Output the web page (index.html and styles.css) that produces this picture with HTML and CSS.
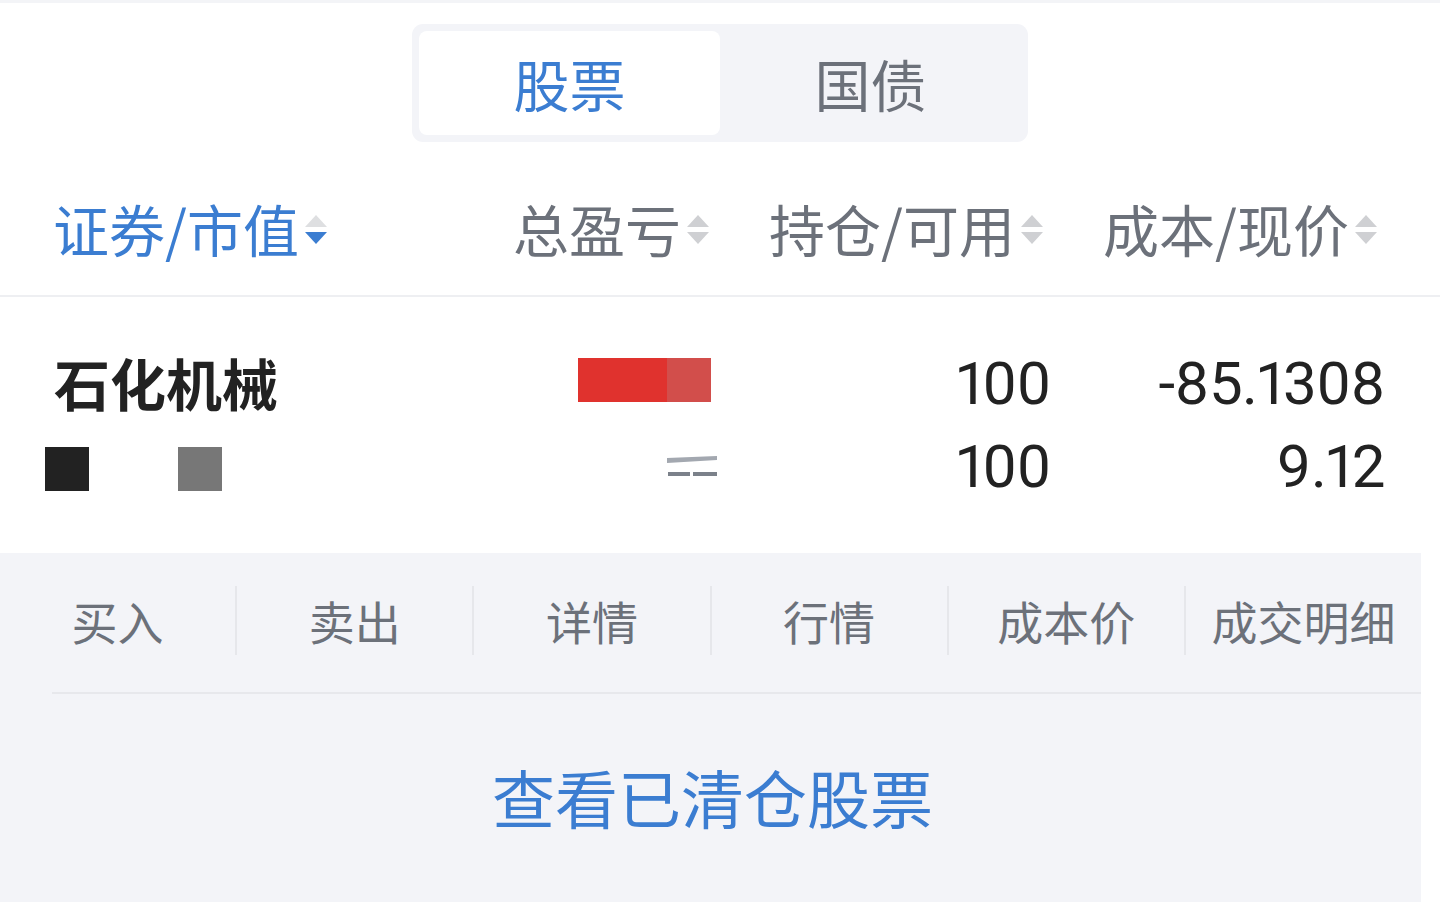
FILE: index.html
```html
<!DOCTYPE html>
<html lang="zh-CN">
<head>
<meta charset="utf-8">
<title>持仓</title>
<link rel="stylesheet" href="styles.css">
</head>
<body>
<div class="topstrip"></div>
<div class="seg-wrap">
  <div class="seg">
    <div class="seg-tab active">股票</div>
    <div class="seg-tab">国债</div>
  </div>
</div>

<div class="thead">
  <div class="th th-left active">证券/市值<span class="sort"><i class="up"></i><i class="down"></i></span></div>
  <div class="th">总盈亏<span class="sort"><i class="up"></i><i class="down"></i></span></div>
  <div class="th">持仓/可用<span class="sort"><i class="up"></i><i class="down"></i></span></div>
  <div class="th">成本/现价<span class="sort"><i class="up"></i><i class="down"></i></span></div>
</div>

<div class="row">
  <div class="cell cell-left">
    <div class="name">石化机械</div>
    <div class="redact-line"><span class="blk blk-dark"></span><span class="blk blk-gray"></span></div>
  </div>
  <div class="cell">
    <div class="line"><span class="redbar"><span class="r1"></span><span class="r2"></span></span></div>
    <div class="line">
      <svg class="dash" width="52" height="22" viewBox="0 0 52 22"><polygon points="0,2 50,0 50,4 0,7" fill="#a3a8b0"/><rect x="1" y="16" width="22" height="4" fill="#7b818a"/><rect x="26" y="16" width="24" height="4" fill="#7b818a"/></svg>
    </div>
  </div>
  <div class="cell num">
    <div class="line">100</div>
    <div class="line">100</div>
  </div>
  <div class="cell num">
    <div class="line">-85.1308</div>
    <div class="line">9.12</div>
  </div>
</div>

<div class="panel">
  <div class="actions">
    <div class="act">买入</div>
    <div class="act">卖出</div>
    <div class="act">详情</div>
    <div class="act">行情</div>
    <div class="act">成本价</div>
    <div class="act">成交明细</div>
  </div>
  <div class="panel-rule"></div>
  <div class="cleared">查看已清仓股票</div>
</div>
</body>
</html>
```

FILE: styles.css
```css
* { box-sizing: border-box; }
html, body { margin: 0; padding: 0; }
body {
  width: 1440px;
  height: 902px;
  overflow: hidden;
  background: #ffffff;
  font-family: "Noto Sans CJK SC", "Noto Sans", sans-serif;
  color: #222222;
}
.topstrip { height: 3px; background: #f3f4f7; }

.seg-wrap { display: flex; justify-content: center; padding-top: 21px; }
.seg {
  display: flex;
  width: 616px;
  height: 118px;
  padding: 7px;
  background: #f3f4f8;
  border-radius: 11px;
}
.seg-tab {
  flex: 1;
  display: flex;
  align-items: center;
  justify-content: center;
  font-size: 56px;
  color: #6c717a;
  border-radius: 8px;
  line-height: 1;
}
.seg-tab.active { background: #ffffff; color: #3b7dd1; }

.thead {
  display: grid;
  grid-template-columns: 336px 320px 334px 334px;
  padding: 0 66px 0 53px;
  height: 131px;
  margin-top: 24px;
  align-items: center;
  border-bottom: 2px solid #eeeff2;
}
.th {
  display: flex;
  align-items: center;
  justify-content: flex-end;
  font-size: 56px;
  line-height: 1;
  color: #6c717a;
  margin-top: -6px;
}
.th-left { justify-content: flex-start; }
.th.active { color: #3b7dd1; }
.sort {
  display: flex;
  flex-direction: column;
  gap: 5px;
  margin-left: 6px;
  width: 22px;
  margin-top: 4px;
}
.sort i {
  display: block;
  width: 0;
  height: 0;
  border-left: 11px solid transparent;
  border-right: 11px solid transparent;
}
.sort .up { border-bottom: 12px solid #cfd0d3; }
.sort .down { border-top: 12px solid #cfd0d3; }
.th.active .sort .up { border-bottom-color: #dedfe1; }
.th.active .sort .down { border-top-color: #3b7dd1; }

.row {
  display: grid;
  grid-template-columns: 336px 320px 334px 334px;
  padding: 45px 60px 42px 54px;
  height: 256px;
}
.cell { display: flex; flex-direction: column; align-items: flex-end; }
.cell-left { align-items: flex-start; }
.line {
  height: 83px;
  display: flex;
  align-items: center;
  font-family: Roboto, "Noto Sans", sans-serif;
  font-size: 60px;
  font-variant-numeric: proportional-nums;
  letter-spacing: -0.5px;
  color: #222222;
  line-height: 1;
}
.cell.num .line { margin-right: -7px; }
.name {
  height: 83px;
  display: flex;
  align-items: center;
  font-size: 56px;
  font-weight: 700;
  color: #222222;
  line-height: 1;
  margin-top: -2px;
}
.redact-line {
  height: 83px;
  display: flex;
  align-items: center;
  gap: 89px;
  margin-left: -9px;
  padding-top: 9px;
}
.blk { display: block; width: 44px; height: 44px; }
.blk-dark { background: #222222; }
.blk-gray { background: #777777; }
.redbar { display: flex; height: 44px; margin-right: -1px; margin-top: -7px; }
.redbar .r1 { width: 89px; background: #e0322e; }
.redbar .r2 { width: 44px; background: #d24e4b; }
.dash { margin-right: -9px; }

.panel {
  width: 1421px;
  background: #f3f4f8;
  height: 349px;
}
.actions {
  display: flex;
  height: 139px;
  align-items: center;
  padding-bottom: 4px;
}
.act {
  flex: 1;
  display: flex;
  align-items: center;
  justify-content: center;
  height: 69px;
  font-size: 46px;
  line-height: 1;
  color: #6c717a;
  border-right: 2px solid #e6e7eb;
  padding-bottom: 2px;
}
.act:last-child { border-right: none; }
.panel-rule { height: 2px; margin-left: 52px; background: #e7e8ec; }
.cleared {
  height: 208px;
  display: flex;
  align-items: center;
  justify-content: center;
  font-size: 63px;
  line-height: 1;
  color: #3b7dd1;
  padding-left: 4px;
  padding-bottom: 6px;
}
```
